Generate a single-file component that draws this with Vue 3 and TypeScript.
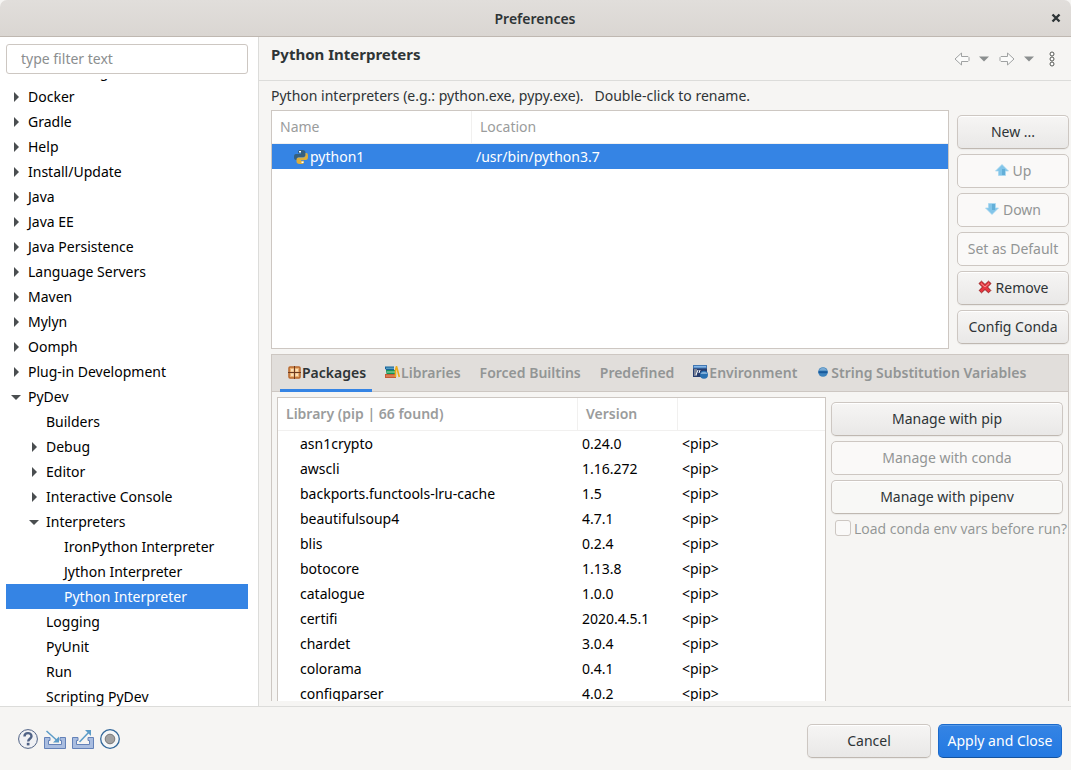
<script setup lang="ts">
import { ref } from 'vue'

interface TreeItem {
  label: string
  depth: number
  state?: 'closed' | 'open'
}

interface PipPackage {
  name: string
  version: string
}

interface Tab {
  label: string
  icon?: 'packages' | 'libraries' | 'environment' | 'dot'
}

const tree: TreeItem[] = [
  { label: 'Data Management', depth: 0, state: 'closed' },
  { label: 'Docker', depth: 0, state: 'closed' },
  { label: 'Gradle', depth: 0, state: 'closed' },
  { label: 'Help', depth: 0, state: 'closed' },
  { label: 'Install/Update', depth: 0, state: 'closed' },
  { label: 'Java', depth: 0, state: 'closed' },
  { label: 'Java EE', depth: 0, state: 'closed' },
  { label: 'Java Persistence', depth: 0, state: 'closed' },
  { label: 'Language Servers', depth: 0, state: 'closed' },
  { label: 'Maven', depth: 0, state: 'closed' },
  { label: 'Mylyn', depth: 0, state: 'closed' },
  { label: 'Oomph', depth: 0, state: 'closed' },
  { label: 'Plug-in Development', depth: 0, state: 'closed' },
  { label: 'PyDev', depth: 0, state: 'open' },
  { label: 'Builders', depth: 1 },
  { label: 'Debug', depth: 1, state: 'closed' },
  { label: 'Editor', depth: 1, state: 'closed' },
  { label: 'Interactive Console', depth: 1, state: 'closed' },
  { label: 'Interpreters', depth: 1, state: 'open' },
  { label: 'IronPython Interpreter', depth: 2 },
  { label: 'Jython Interpreter', depth: 2 },
  { label: 'Python Interpreter', depth: 2 },
  { label: 'Logging', depth: 1 },
  { label: 'PyUnit', depth: 1 },
  { label: 'Run', depth: 1 },
  { label: 'Scripting PyDev', depth: 1 },
]

const tabs: Tab[] = [
  { label: 'Packages', icon: 'packages' },
  { label: 'Libraries', icon: 'libraries' },
  { label: 'Forced Builtins' },
  { label: 'Predefined' },
  { label: 'Environment', icon: 'environment' },
  { label: 'String Substitution Variables', icon: 'dot' },
]

const packages: PipPackage[] = [
  { name: 'asn1crypto', version: '0.24.0' },
  { name: 'awscli', version: '1.16.272' },
  { name: 'backports.functools-lru-cache', version: '1.5' },
  { name: 'beautifulsoup4', version: '4.7.1' },
  { name: 'blis', version: '0.2.4' },
  { name: 'botocore', version: '1.13.8' },
  { name: 'catalogue', version: '1.0.0' },
  { name: 'certifi', version: '2020.4.5.1' },
  { name: 'chardet', version: '3.0.4' },
  { name: 'colorama', version: '0.4.1' },
  { name: 'configparser', version: '4.0.2' },
]

const selected = ref('Python Interpreter')
const activeTab = ref('Packages')
const filter = ref('')
</script>

<template>
  <div class="window">
    <header class="titlebar">
      <h1>Preferences</h1>
      <button class="close" aria-label="Close">
        <svg width="10" height="10" viewBox="0 0 10 10"><path d="M1.5 1.5 8.5 8.5M8.5 1.5 1.5 8.5" stroke="#2e3436" stroke-width="2.4" /></svg>
      </button>
    </header>

    <div class="body">
      <aside class="sidebar">
        <input v-model="filter" class="filter" type="text" placeholder="type filter text" aria-label="Filter preferences" />
        <div class="scroller">
          <ul class="tree">
            <li v-for="item in tree" :key="item.label" :class="['node', `depth-${item.depth}`, { selected: item.label === selected }]" @click="selected = item.label">
              <span class="twisty">
                <svg v-if="item.state === 'closed'" width="10" height="10" viewBox="0 0 10 10"><path d="M3 0 8 5 3 10Z" fill="#4a4e50" /></svg>
                <svg v-else-if="item.state === 'open'" width="10" height="10" viewBox="0 0 10 10"><path d="M0 3H10L5 8Z" fill="#4a4e50" /></svg>
              </span>
              <span>{{ item.label }}</span>
            </li>
          </ul>
        </div>
      </aside>

      <main class="page">
        <div class="page-head">
          <h2>Python Interpreters</h2>
          <nav class="history">
            <button aria-label="Back">
              <svg width="16" height="14" viewBox="0 0 16 14"><path d="M1 7 7.500 1V4.500H14L15 5.500V8.500L14 9.500H7.500V13Z" fill="#fbfbfa" stroke="#a0a2a2" /></svg>
            </button>
            <button class="drop" aria-label="Back history">
              <svg width="10" height="6" viewBox="0 0 10 6"><path d="M0 .5H10L5 5.5Z" fill="#8b8f8f" /></svg>
            </button>
            <button aria-label="Forward">
              <svg width="16" height="14" viewBox="0 0 16 14"><path d="M15 7 8.500 1V4.500H2L1 5.500V8.500L2 9.500H8.500V13Z" fill="#fbfbfa" stroke="#a0a2a2" /></svg>
            </button>
            <button class="drop" aria-label="Forward history">
              <svg width="10" height="6" viewBox="0 0 10 6"><path d="M0 .5H10L5 5.5Z" fill="#8b8f8f" /></svg>
            </button>
            <button class="more" aria-label="View menu">
              <svg width="6" height="16" viewBox="0 0 6 16" fill="#fff" stroke="#555753"><circle cx="3" cy="3" r="2" /><circle cx="3" cy="8" r="2" /><circle cx="3" cy="13" r="2" /></svg>
            </button>
          </nav>
        </div>

        <div class="content">
          <p class="intro">Python interpreters (e.g.: python.exe, pypy.exe). &nbsp; Double-click to rename.</p>

          <div class="interpreters">
            <div class="grid-frame">
              <table class="grid">
                <colgroup><col class="col-name" /><col /></colgroup>
                <thead><tr><th>Name</th><th>Location</th></tr></thead>
                <tbody>
                  <tr class="selected">
                    <td class="first">
                      <span class="with-icon">
                        <svg width="14" height="14" viewBox="0 0 14 14">
                          <path d="M6.500 0H8.500C10.500 0 11.500 1 11.500 2.500V5C11.500 6.300 10.500 7 9.300 7H5C3.500 7 3 8 3 9.500V10H2C.5 10 0 9 0 7S.5 4 2 4H7V3.200H4V2C4 .6 5 0 6.500 0Z" fill="#36607f" />
                          <path d="M7.500 14H5.500C3.500 14 2.500 13 2.500 11.500V9.500C2.500 8.200 3.500 7.500 4.700 7.500H9C10.500 7.500 11.500 6.500 11.500 5V3H12.500C13.700 3 14 4.500 14 6.500S13.500 10 12 10H7V10.800H10V12C10 13.400 9 14 7.500 14Z" fill="#dcae3c" />
                          <rect x="5" y="1" width="2" height="1.500" fill="#fff" /><rect x="7.500" y="11.500" width="2" height="1.500" fill="#fff" />
                        </svg>
                        python1
                      </span>
                    </td>
                    <td>/usr/bin/python3.7</td>
                  </tr>
                </tbody>
              </table>
            </div>
            <div class="actions">
              <button class="btn">New ...</button>
              <button class="btn" disabled>
                <svg width="14" height="12" viewBox="0 0 14 12"><path d="M7 .5 13.500 7H10.500V11.500H3.500V7H.5Z" fill="#82c5e9" stroke="#a5d5ef" stroke-width=".7" /><path d="M7 5H10V11H7Z" fill="#63afd8" /></svg>
                Up
              </button>
              <button class="btn" disabled>
                <svg width="14" height="12" viewBox="0 0 14 12"><path d="M7 11.500 13.500 5H10.500V.5H3.500V5H.5Z" fill="#82c5e9" stroke="#a5d5ef" stroke-width=".7" /><path d="M7 1H10V7H7Z" fill="#63afd8" /></svg>
                Down
              </button>
              <button class="btn" disabled>Set as Default</button>
              <button class="btn">
                <svg width="14" height="14" viewBox="0 0 14 14"><path d="M1 3.500 3.500 1.200 7 4.500 10.500 1.200 13 3.500 9.500 7 12.800 10.500 10.500 12.800 7 9.500 3.500 12.800 1.200 10.500 4.500 7Z" fill="#e8343f" stroke="#96201f" /><path d="M3 3.500 7 7 11 3.500" fill="none" stroke="#f3918f" /></svg>
                Remove
              </button>
              <button class="btn">Config Conda</button>
            </div>
          </div>

          <section class="notebook">
            <div class="tabs" role="tablist">
              <button v-for="tab in tabs" :key="tab.label" role="tab" :aria-selected="tab.label === activeTab" :class="['tab', { active: tab.label === activeTab }]" @click="activeTab = tab.label">
                <svg v-if="tab.icon === 'packages'" width="13" height="13" viewBox="0 0 13 13">
                  <rect x="1" y="1" width="11" height="11" rx="1" fill="#e9b073" stroke="#b8672c" stroke-width="1.500" /><path d="M3 3H5.500V5.500H3ZM7.500 3H10V5.500H7.500ZM3 7.500H5.500V10H3ZM7.500 7.500H10V10H7.500Z" fill="#fbe0b8" /><path d="M6.500 0V13M0 6.500H13" stroke="#6e3c20" />
                </svg>
                <svg v-else-if="tab.icon === 'libraries'" width="15" height="12" viewBox="0 0 15 12">
                  <path d="M0 .5H9V4H1V3.500L0 3Z" fill="#17649b" /><path d="M1 2.200H9" stroke="#75b9d2" /><path d="M1 4H10V8H1.500Z" fill="#139457" /><path d="M2 6H10" stroke="#a5dfb5" /><path d="M0 8H11V12H0Z" fill="#c45c35" /><path d="M1 10H11" stroke="#ee9c72" /><path d="M10.500 11V4L11.500 .5 12.500 4 14.300 11" fill="none" stroke="#edaa18" stroke-width="1.600" />
                </svg>
                <svg v-else-if="tab.icon === 'environment'" width="15" height="14" viewBox="0 0 15 14">
                  <rect width="14" height="12" fill="#263e70" /><rect x=".5" y=".5" width="13" height="2.500" fill="#86b7e9" stroke="#4278b3" /><rect x="1" y="4" width="3" height="7" fill="#7b8397" /><path d="M3 10 5 5M6 8 7 5" stroke="#fff" /><circle cx="11" cy="9.800" r="4" fill="#2870b1" /><path d="M7.500 9C8.500 6 13.500 6 14.500 9Z" fill="#7fadd7" />
                </svg>
                <svg v-else-if="tab.icon === 'dot'" class="dot" width="10" height="10" viewBox="0 0 10 10">
                  <circle cx="5" cy="5" r="4.800" fill="#3d83bd" /><path d="M1 3.500C2.500-.2 7.500-.2 9 3.500Z" fill="#7babd4" /><path d="M.5 5.200H9.500" stroke="#185a9c" stroke-width="2" />
                </svg>
                <span>{{ tab.label }}</span>
              </button>
            </div>

            <div class="tab-page">
              <div class="grid-frame packages">
                <table class="grid bold-head">
                  <colgroup><col class="col-lib" /><col class="col-version" /><col /></colgroup>
                  <thead><tr><th>Library (pip | 66 found)</th><th>Version</th><th></th></tr></thead>
                  <tbody>
                    <tr v-for="pkg in packages" :key="pkg.name">
                      <td class="first">{{ pkg.name }}</td>
                      <td>{{ pkg.version }}</td>
                      <td>&lt;pip&gt;</td>
                    </tr>
                  </tbody>
                </table>
              </div>
              <div class="actions manage">
                <button class="btn">Manage with pip</button>
                <button class="btn" disabled>Manage with conda</button>
                <button class="btn light">Manage with pipenv</button>
                <label class="check"><input type="checkbox" disabled />Load conda env vars before run?</label>
              </div>
            </div>
          </section>
        </div>
      </main>
    </div>

    <footer class="footer">
      <div class="tools">
        <button aria-label="Help">
          <svg width="20" height="20" viewBox="0 0 20 20"><circle cx="10" cy="10" r="9.400" fill="#f0f1f4" stroke="#4f6285" /><path d="M6.500 7.500C6.500 3 13.500 3 13.500 7.300 13.500 9.800 10.200 9.800 10.200 12.500" fill="none" stroke="#4f6285" stroke-width="2.400" /><rect x="8.800" y="13.800" width="2.700" height="2.600" fill="#4f6285" /></svg>
        </button>
        <button aria-label="Import">
          <svg width="22" height="20" viewBox="0 0 22 20"><path d="M6 8.500H.5V19.500H21.500V8.500H16V11.500H17.500V15.500H4.500V11.500H6Z" fill="#a9bde0" stroke="#6482b8" /><path d="M2.500 2 13 11.500" stroke="#5c9cc8" stroke-width="1.500" /><path d="M15 13.500V7.500L9 13.500Z" fill="#5c9cc8" /></svg>
        </button>
        <button aria-label="Export">
          <svg width="22" height="20" viewBox="0 0 22 20"><path d="M6 8.500H.5V19.500H21.500V8.500H16V11.500H17.500V15.500H4.500V11.500H6Z" fill="#a9bde0" stroke="#6482b8" /><path d="M7.500 13 17.500 2.500" stroke="#5c9cc8" stroke-width="1.500" /><path d="M19 1V7L13 1Z" fill="#5c9cc8" /></svg>
        </button>
        <button aria-label="Record">
          <svg width="20" height="20" viewBox="0 0 20 20"><circle cx="10" cy="10" r="9.300" fill="#f5f7f8" stroke="#33689a" stroke-width="1.300" /><circle cx="10" cy="10" r="4.800" fill="#a2a2a2" stroke="#777" /></svg>
        </button>
      </div>
      <div class="confirm">
        <button class="btn">Cancel</button>
        <button class="btn primary">Apply and Close</button>
      </div>
    </footer>
  </div>
</template>

<style>
body {
  margin: 0;
}
</style>

<style scoped>
.window {
  display: flex;
  flex-direction: column;
  height: 100vh;
  overflow: hidden;
  background: #f6f5f3;
  color: #2e3436;
  font: 14px/25px "Noto Sans", "Open Sans", sans-serif;
}
.window * {
  box-sizing: border-box;
}
button,
input {
  font: inherit;
  color: inherit;
}
button {
  padding: 0;
  border: 0;
  background: none;
}
svg {
  display: block;
  flex: none;
}
h1,
h2,
p,
ul {
  margin: 0;
  padding: 0;
}
.titlebar {
  display: flex;
  align-items: center;
  height: 37px;
  flex: none;
  padding: 0 10px 0 19px;
  border-bottom: 1px solid #bfb8b1;
  border-radius: 7px 7px 0 0;
  background: linear-gradient(#e1dedb, #dad6d2);
}
h1 {
  flex: 1;
  text-align: center;
  font-size: 14px;
  font-weight: 600;
}
.body {
  display: flex;
  flex: 1;
  min-height: 0;
}
.sidebar {
  display: flex;
  flex-direction: column;
  width: 259px;
  flex: none;
  padding: 7px 10px 0 6px;
  border-right: 1px solid #dcdcda;
  background: #fff;
}
.filter {
  height: 30px;
  flex: none;
  margin-bottom: 5px;
  padding: 0 14px 2px;
  border: 1px solid #cdc7c2;
  border-radius: 3px;
  background: #fff;
}
.filter::placeholder {
  color: #8b8e8f;
}
.scroller {
  flex: 1;
  min-height: 0;
  overflow: hidden;
}
.tree {
  margin-top: -20px;
  list-style: none;
  color: #000;
}
.node {
  display: flex;
  align-items: center;
  height: 25px;
  padding-left: 5px;
  white-space: nowrap;
}
.depth-1 {
  padding-left: 23px;
}
.depth-2 {
  padding-left: 41px;
}
.twisty {
  width: 17px;
  flex: none;
}
.selected {
  background: #3584e4;
  color: #fff;
}
.page {
  display: flex;
  flex-direction: column;
  flex: 1;
  min-width: 0;
}
.page-head {
  display: flex;
  justify-content: space-between;
  align-items: center;
  height: 44px;
  flex: none;
  padding: 0 16px 0 12px;
  border-bottom: 1px solid #dcdcda;
}
h2 {
  font-size: 15px;
  font-weight: 700;
  padding-bottom: 8px;
}
.history {
  display: flex;
  align-items: center;
}
.history .drop {
  margin: 0 10px 0 9px;
}
.history .more {
  margin-left: 5px;
}
.content {
  display: flex;
  flex-direction: column;
  flex: 1;
  min-height: 0;
  padding: 2px 2px 5px 12px;
}
.intro {
  height: 27px;
  flex: none;
}
.interpreters {
  display: flex;
  gap: 8px;
  flex: none;
}
.grid-frame {
  flex: 1;
  min-width: 0;
  overflow: hidden;
  border: 1px solid #cdc7c2;
  background: #fff;
}
.grid {
  width: 100%;
  table-layout: fixed;
  border-collapse: separate;
  border-spacing: 0;
}
.col-name {
  width: 200px;
}
.col-lib {
  width: 300px;
}
.col-version {
  width: 100px;
}
th {
  height: 33px;
  padding: 0 8px 2px;
  border-right: 1px solid #f1f0ef;
  border-bottom: 1px solid #f1f0ef;
  text-align: left;
  font-weight: 400;
  color: #9a9c9c;
}
th:last-child {
  border-right: 0;
}
.bold-head th {
  font-weight: 600;
}
td {
  height: 25px;
  padding: 0 4px;
  white-space: nowrap;
}
td.first {
  padding-left: 22px;
}
.packages {
  color: #000;
}
.with-icon {
  display: flex;
  align-items: center;
  gap: 2px;
}
.actions {
  display: flex;
  flex-direction: column;
  gap: 5px;
  width: 112px;
  padding: 5px 0;
}
.btn {
  display: flex;
  align-items: center;
  justify-content: center;
  gap: 4px;
  height: 34px;
  padding-bottom: 2px;
  border: 1px solid #cdc7c2;
  border-bottom-color: #bfb8b1;
  border-radius: 5px;
  background: linear-gradient(#f6f5f4, #e9e8e7);
  box-shadow: inset 0 1px #fff, 0 1px 1px #0000000d;
  white-space: nowrap;
}
.btn:disabled {
  border-color: #cdc7c2;
  background: #faf9f8;
  box-shadow: none;
  color: #929595;
}
.btn.light {
  background: #f8f8f6;
}
.notebook {
  display: flex;
  flex-direction: column;
  flex: 1;
  min-height: 0;
  margin-top: 5px;
  border: 1px solid #cdc7c2;
  border-bottom: 0;
}
.tabs {
  display: flex;
  gap: 5px;
  height: 37px;
  flex: none;
  padding-left: 8px;
  border-bottom: 1px solid #cdc7c2;
  background: #e1dedb;
}
.tab {
  display: flex;
  align-items: center;
  gap: 1px;
  height: 37px;
  padding: 0 6px 0 8px;
  border-bottom: 3px solid transparent;
  color: #929595;
  font-weight: 600;
  white-space: nowrap;
}
.tab.active {
  border-bottom-color: #3584e4;
  color: #2e3436;
}
.dot {
  margin: 0 2px;
}
.tab-page {
  display: flex;
  gap: 5px;
  flex: 1;
  min-height: 0;
  padding: 5px 5px 0;
}
.packages {
  border-bottom: 0;
}
.manage {
  width: 232px;
}
.check {
  display: flex;
  align-items: center;
  gap: 3px;
  height: 18px;
  padding-left: 4px;
  color: #929595;
  font-family: "Open Sans", "Noto Sans", sans-serif;
  white-space: nowrap;
}
.check input {
  appearance: none;
  width: 16px;
  height: 16px;
  flex: none;
  margin: 0;
  border: 1px solid #cdc7c2;
  border-radius: 3px;
  background: #faf9f8;
}
.footer {
  display: flex;
  justify-content: space-between;
  align-items: center;
  height: 64px;
  flex: none;
  padding: 5px 9px 0 18px;
  border-top: 1px solid #dcdcda;
}
.tools {
  display: flex;
  gap: 6px;
  padding-bottom: 4px;
}
.confirm {
  display: flex;
  gap: 7px;
}
.confirm .btn {
  width: 124px;
}
.btn.primary {
  border-color: #1b6acb #1b6acb #15539e;
  background: linear-gradient(#3584e4, #2379e2);
  box-shadow: inset 0 1px #5599e8;
  color: #fff;
}
</style>
